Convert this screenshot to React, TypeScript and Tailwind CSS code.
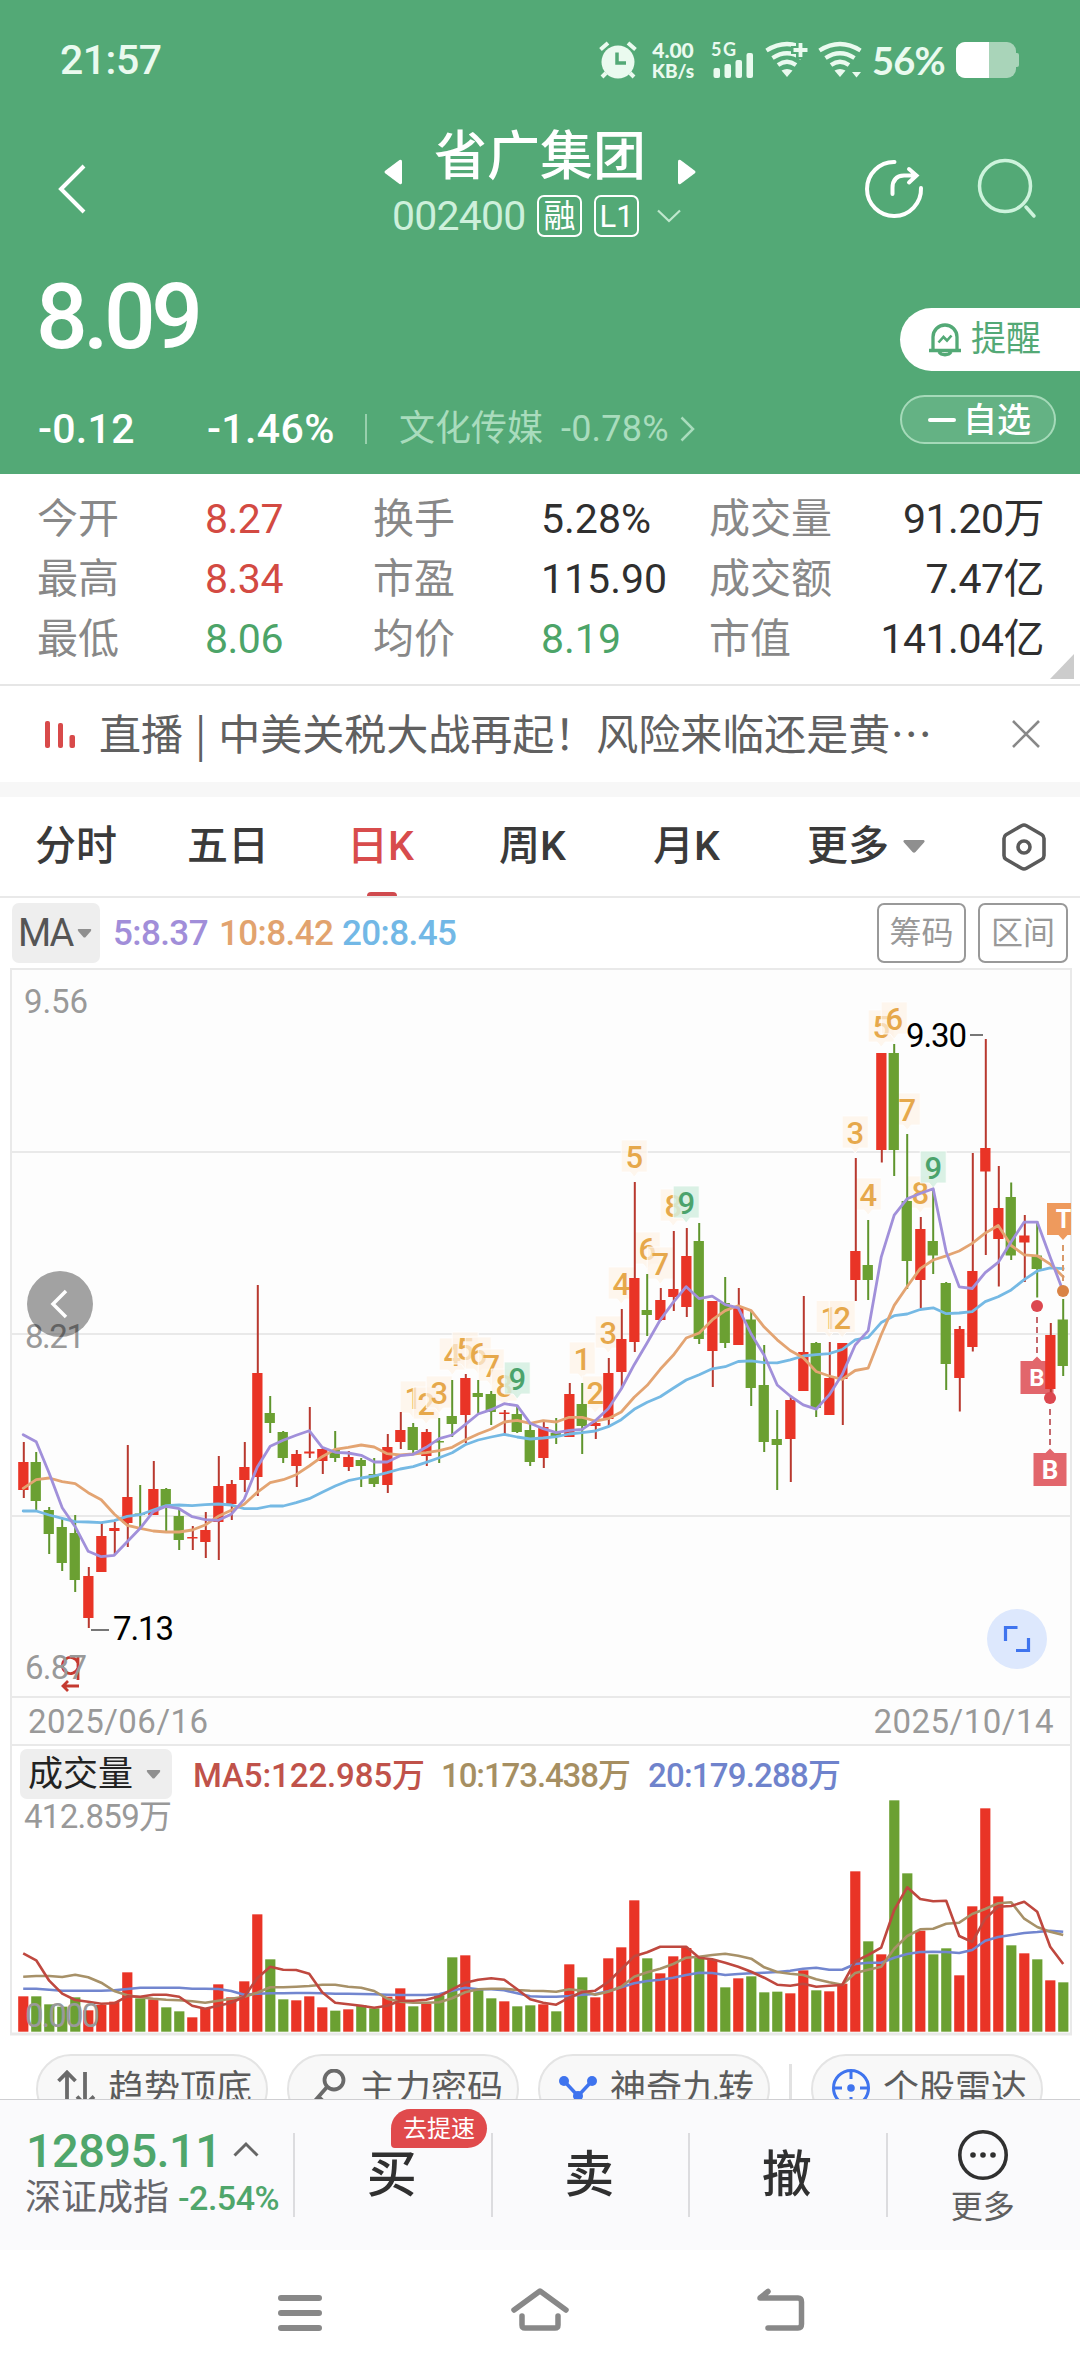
import React from "react";

const FONT = "font-[Roboto,'Noto_Sans_CJK_SC',sans-serif]";

/* ---------- chart data ---------- */

const X0 = 23.2;
const STEP = 13;
const xAt = (i: number) => X0 + STEP * i;

type Candle = ["R" | "G", number, number, number, number];

// direction, high, body top, body bottom, low (all as vertical positions)
const candles: Candle[] = [
  ["R", 1442, 1462, 1490, 1498], ["G", 1452, 1462, 1501, 1510], ["G", 1507, 1510, 1534, 1554],
  ["G", 1519, 1527, 1563, 1571], ["G", 1515, 1533, 1580, 1592], ["R", 1567, 1576, 1618, 1628],
  ["R", 1523, 1536, 1572, 1572], ["R", 1522, 1528, 1531, 1554], ["R", 1445, 1497, 1523, 1547],
  ["G", 1485, 1513.5, 1515, 1528], ["R", 1461, 1489, 1515, 1515], ["G", 1488, 1489, 1506, 1531],
  ["G", 1509, 1516, 1540, 1550], ["R", 1526, 1537, 1538.5, 1550], ["R", 1512, 1530, 1542, 1558],
  ["R", 1456, 1486, 1522, 1560], ["R", 1480, 1484, 1504, 1520], ["R", 1442, 1467, 1480, 1492],
  ["R", 1285, 1373, 1477, 1496], ["G", 1396, 1413, 1423, 1433], ["G", 1431, 1432, 1458, 1463],
  ["R", 1450, 1454, 1466, 1487], ["R", 1407, 1451.5, 1453.5, 1458], ["R", 1448, 1449, 1461, 1474],
  ["G", 1431, 1450, 1458, 1462], ["R", 1451, 1457, 1467, 1471], ["G", 1458, 1460, 1466, 1487],
  ["G", 1458, 1474, 1484, 1487], ["R", 1434, 1447, 1485, 1493], ["R", 1412, 1430, 1442, 1449],
  ["G", 1423, 1427, 1450, 1454], ["R", 1429, 1432, 1456, 1466], ["G", 1418, 1441, 1442.5, 1463],
  ["G", 1380, 1416, 1424, 1437], ["R", 1374, 1378, 1415, 1443], ["G", 1380, 1393, 1397, 1413],
  ["G", 1391, 1394, 1412, 1425], ["R", 1410, 1412.5, 1414, 1435], ["G", 1405, 1414, 1432, 1433],
  ["G", 1423, 1430, 1462, 1466], ["R", 1422, 1427, 1458, 1468], ["G", 1418, 1433, 1437, 1444],
  ["R", 1383, 1394, 1437, 1437], ["G", 1383, 1404, 1426, 1454], ["R", 1420, 1423, 1426, 1439],
  ["R", 1358, 1373, 1419, 1426], ["R", 1309, 1339, 1372, 1387], ["R", 1182, 1278, 1342, 1352],
  ["G", 1274, 1310, 1315, 1336], ["R", 1288, 1300, 1320, 1321], ["R", 1231, 1289, 1297, 1311],
  ["R", 1228, 1256, 1307, 1317], ["G", 1223, 1241, 1339, 1344], ["R", 1301, 1301, 1351, 1387],
  ["G", 1277, 1303, 1343, 1348], ["R", 1288, 1307, 1345, 1345], ["G", 1311, 1319.5, 1388, 1406],
  ["G", 1345, 1385, 1442, 1452], ["G", 1410, 1439, 1445, 1490], ["R", 1397, 1400, 1439, 1482],
  ["R", 1296, 1352, 1391, 1391], ["G", 1342, 1343, 1408, 1417], ["R", 1342, 1378, 1415, 1415],
  ["R", 1343, 1343, 1379, 1425], ["R", 1158, 1251, 1280, 1301], ["G", 1220, 1265, 1280, 1300],
  ["R", 1053, 1053, 1150, 1162.5], ["G", 1044, 1053, 1150, 1176], ["G", 1134, 1201, 1261, 1289],
  ["R", 1217, 1229, 1280, 1308], ["G", 1189, 1241, 1255.5, 1274], ["G", 1282, 1283, 1364, 1390],
  ["R", 1326, 1329, 1378, 1411.5], ["R", 1153, 1271, 1347, 1351.5], ["R", 1039, 1148, 1171.5, 1255],
  ["R", 1166, 1208, 1239, 1286.5], ["G", 1182.5, 1197, 1255.5, 1260], ["R", 1215, 1235.5, 1242.5, 1282],
  ["G", 1221, 1255.5, 1269, 1297.5], ["R", 1323, 1335, 1389, 1397], ["G", 1299, 1319.5, 1366, 1376],
];

const seg = (base: number, scale: number, v: number[]) => v.map((n) => base + n / scale);
const path = (ys: number[]) => ys.map((y, i) => `${i ? "L" : "M"}${xAt(i).toFixed(1)} ${y.toFixed(1)}`).join("");

const ma5 = [
  ...seg(1240, 3, [584, 605, 700, 803, 860, 934, 950, 946, 905, 865, 815, 799, 806, 830, 839, 841, 823, 778, 682, 619, 601, 586, 572, 622, 637]),
  ...seg(1140, 3, [939, 946, 966, 966, 947, 943, 922, 896, 885, 854, 822, 809, 791, 797, 850, 866, 878, 871, 868, 842, 806, 747, 674, 608, 540, 487, 440, 476]),
  ...seg(980, 2.904, [918, 943, 952, 1028, 1090, 1176, 1208, 1234, 1246, 1205, 1146, 1060, 1018, 805, 683, 635, 620, 606, 790, 891, 896, 850, 820, 760, 703, 703, 805, 905]),
];
const ma10 = [
  ...seg(1240, 3, [745, 719, 714, 725, 731, 758, 779, 822, 856, 865, 873, 876, 876, 870, 855, 829, 811, 793, 757, 728, 719, 704, 678, 650, 628]),
  ...seg(1140, 3, [922, 915, 921, 941, 945, 942, 938, 932, 922, 900, 882, 867, 846, 841, 850, 842, 846, 832, 832, 843, 836, 816, 772, 736, 688, 646, 594, 579]),
  ...seg(980, 2.904, [987, 960, 946, 960, 1008, 1045, 1076, 1097, 1137, 1150, 1160, 1134, 1127, 1030, 945, 890, 838, 813, 801, 787, 765, 735, 713, 771, 798, 801, 825, 862]),
];
const ma20 = [
  ...seg(1240, 3, [813, 813, 825, 835, 845, 846, 848, 842, 829, 824, 810, 797, 795, 797, 794, 792, 795, 806, 806, 798, 798, 788, 776, 757, 738]),
  ...seg(1140, 3, [1022, 1014, 1008, 998, 987, 980, 967, 953, 938, 914, 900, 891, 883, 891, 897, 894, 890, 882, 878, 873, 860, 839, 808, 787, 770, 745, 720, 704]),
  ...seg(980, 2.904, [1129, 1123, 1108, 1106, 1111, 1112, 1103, 1092, 1088, 1085, 1073, 1045, 1038, 995, 975, 970, 957, 952, 969, 967, 963, 934, 920, 900, 870, 845, 836, 838]),
];

const volumes = [
  889, 889, 913, 920, 892, 931, 915, 905, 817, 895, 898, 922, 934, 952, 925, 853, 892, 844, 643, 778, 898, 901, 889, 922, 932, 928, 916,
  925, 890, 865, 919, 911, 886, 772, 766, 870, 895, 904, 919, 916, 913, 934, 793, 832, 892, 775, 742, 601, 775, 820, 769, 744, 770, 780,
  862, 835, 829, 877, 875, 880, 811, 871, 874, 851, 514, 724, 763, 301, 520, 692, 763, 745, 826, 619, 325, 589, 736, 760, 778, 841, 847,
];
const vol5 = [
  760, 781, 842, 881, 900, 905, 911, 910, 889, 890, 884, 884, 890, 917, 926, 917, 908, 890, 835, 800, 809, 810, 821, 877, 908, 913, 917,
  923, 917, 902, 902, 899, 889, 868, 848, 839, 835, 839, 868, 898, 908, 914, 893, 876, 872, 846, 808, 769, 757, 740, 740, 740, 773, 778,
  788, 800, 815, 833, 854, 857, 851, 860, 857, 855, 784, 765, 743, 630, 562, 597, 604, 602, 708, 726, 656, 620, 618, 605, 635, 740, 792,
];
const vol10 = [
  830, 828, 828, 831, 824, 832, 848, 873, 886, 892, 896, 899, 901, 904, 908, 902, 896, 890, 878, 862, 862, 860, 858, 854, 854, 860, 863,
  873, 896, 905, 908, 908, 907, 895, 877, 868, 866, 866, 870, 872, 873, 875, 868, 872, 884, 875, 860, 830, 817, 806, 792, 773, 770, 765,
  761, 767, 776, 802, 816, 821, 825, 838, 847, 854, 819, 809, 800, 746, 708, 688, 686, 671, 668, 642, 627, 610, 607, 656, 681, 695, 705,
];
const vol20 = [
  866, 866, 869, 872, 872, 872, 872, 871, 867, 863, 863, 863, 863, 866, 866, 867, 873, 884, 881, 880, 880, 879, 879, 880, 881, 881, 882,
  883, 884, 885, 885, 885, 883, 872, 863, 868, 868, 871, 880, 889, 890, 890, 888, 884, 882, 874, 862, 850, 843, 839, 833, 825, 818, 819,
  825, 822, 820, 818, 816, 812, 806, 803, 809, 809, 792, 788, 788, 773, 762, 756, 755, 756, 759, 750, 722, 711, 705, 699, 696, 692, 695,
];

// candle index, label, vertical centre of the digit
const tags: [number, string, number][] = [
  [30, "1", 1398], [31, "2", 1404], [32, "3", 1393], [33, "4", 1355], [34, "5", 1349], [35, "6", 1354],
  [36, "7", 1366], [37, "8", 1386], [38, "9", 1379], [43, "1", 1359], [44, "2", 1393], [45, "3", 1333],
  [46, "4", 1284], [47, "5", 1157], [48, "6", 1249], [49, "7", 1264], [50, "8", 1206], [51, "9", 1203],
  [62, "1", 1317.5], [63, "2", 1317.5], [64, "3", 1133], [65, "4", 1195], [66, "5", 1027], [67, "6", 1019],
  [68, "7", 1110], [69, "8", 1193], [70, "9", 1168],
];

const RED = "#e93426";
const GREEN = "#6ba032";

function Tag({ i, label, cy }: { i: number; label: string; cy: number }) {
  const x = xAt(i);
  const nine = label === "9";
  const shape = `M${x - 13} ${cy - 17}h26v32h-9l-4 5l-4 -5h-9z`;
  return (
    <g>
      <path d={shape} fill={nine ? "#d3eee0" : "#fef2e5"} fillOpacity={nine ? 0.85 : 0.7} stroke="#fff" strokeOpacity="0.8" strokeWidth="1" />
      <text x={x} y={cy + 11} fontSize="31" fontWeight="500" textAnchor="middle" fill={nine ? "#4ba36c" : "#e6a84b"}>
        {label}
      </text>
    </g>
  );
}

function PriceChart() {
  return (
    <svg width="1080" height="730" viewBox="0 968 1080 730" className="block font-[Roboto]">
      <rect x="11" y="969" width="1060" height="728" fill="#fdfdfd" stroke="#e9e9e9" strokeWidth="2" />
      {[1152, 1334, 1516].map((y) => (
        <line key={y} x1="11" x2="1070" y1={y} y2={y} stroke="#e9e9e9" strokeWidth="2" />
      ))}
      {tags.map(([i, label, cy]) => (
        <Tag key={`${i}`} i={i} label={label} cy={cy} />
      ))}
      <path d="M1020.500 1361h12l4.500 -4.500l4.500 4.500h12v33h-33z" fill="#e2666c" />
      <text x="1037" y="1386" fontSize="24" fontWeight="700" textAnchor="middle" fill="#fff">B</text>
      {candles.map(([dir, high, top, bottom, low], i) => {
        const x = xAt(i) - (dir === "G" ? 0.6 : 0);
        return (
          <g key={i}>
            <rect x={x - 0.4} y={high} width="2" height={low - high} fill={dir === "R" ? "#b8392f" : "#5f952d"} />
            <rect x={x - 5} y={top} width="10.300" height={bottom - top} fill={dir === "R" ? RED : GREEN} />
          </g>
        );
      })}
      <g fill="none" strokeWidth="2.800" strokeLinejoin="round" strokeLinecap="round">
        <path d={path(ma20)} stroke="#75b9e4" />
        <path d={path(ma10)} stroke="#e3a472" />
        <path d={path(ma5)} stroke="#a190da" />
      </g>
      <g strokeWidth="2" strokeDasharray="6 4" fill="none">
        <path d="M1037 1317V1357" stroke="#c4686c" />
        <path d="M1050 1409V1448" stroke="#c4686c" />
        <path d="M1063 1245V1282" stroke="#d99a6a" />
      </g>
      <circle cx="1037" cy="1306" r="6" fill="#dc474f" />
      <circle cx="1050" cy="1398" r="6" fill="#dc474f" />
      <circle cx="1063" cy="1291" r="6" fill="#d98345" />
      <path d="M1033.500 1453h12l4.500 -4.500l4.500 4.500h12v33h-33z" fill="#e2666c" />
      <text x="1050" y="1479" fontSize="26" fontWeight="700" textAnchor="middle" fill="#fff">B</text>
      <svg x="1040" y="1195" width="31" height="50" viewBox="1040 1195 31 50">
        <path d="M1047 1203h33v32h-12.500l-4.500 5l-4.500 -5h-11.500z" fill="#ee9a5d" />
        <text x="1063.500" y="1228" fontSize="25" fontWeight="700" textAnchor="middle" fill="#fff">T</text>
      </svg>
      <path d="M91 1630h18M970 1035h13" stroke="#777" strokeWidth="2" />
      <g fontSize="33" fill="#000">
        <text x="113" y="1640" textLength="61">7.13</text>
        <text x="906" y="1047" textLength="61">9.30</text>
      </g>
      <path d="M78 1656v24M78 1663a8 8 0 1 0 0 5M79 1686H63m5 -5l-5 5l5 5" stroke="#c53a30" strokeWidth="2.800" fill="none" />
      <g fontSize="33" fill="#999">
        <text x="24" y="1013" textLength="64">9.56</text>
        <text x="25" y="1348" textLength="60">8.21</text>
        <text x="25" y="1679" textLength="62">6.87</text>
      </g>
      <circle cx="60" cy="1304" r="33" fill="#000" fillOpacity="0.36" />
      <path d="M66 1291L53 1304L66 1317" stroke="#fff" strokeWidth="3.500" fill="none" />
      <circle cx="1017" cy="1639" r="30" fill="#dde8fd" />
      <path d="M1017.500 1627.500H1005.500V1641M1016 1650.500H1028.500V1638" stroke="#3f74ee" strokeWidth="3.200" fill="none" />
    </svg>
  );
}

function VolumeChart() {
  const toY = (v: number) => 1700 + v / 3;
  return (
    <svg width="1080" height="236" viewBox="0 1800 1080 236" className="block overflow-visible font-[Roboto,'Noto_Sans_CJK_SC']">
      <path d="M11 1800V2034M1071 1800V2034" stroke="#e9e9e9" strokeWidth="2" />
      <path d="M10 2034H1072" stroke="#e9e9e9" strokeWidth="3" />
      <text x="24" y="1828" fontSize="33" fill="#999" textLength="148">412.859万</text>
      {volumes.map((v, i) => (
        <rect key={i} x={xAt(i) - 5} y={toY(v)} width="10.200" height={2031.7 - toY(v)} fill={candles[i][0] === "R" ? RED : GREEN} />
      ))}
      <g fill="none" strokeWidth="2.600" strokeLinejoin="round">
        <path d={path(vol20.map(toY))} stroke="#7286cf" />
        <path d={path(vol10.map(toY))} stroke="#a79168" />
        <path d={path(vol5.map(toY))} stroke="#bf483f" />
      </g>
      <text x="25" y="2027" fontSize="33" fill="#999" textLength="75">0.000</text>
    </svg>
  );
}

/* ---------- header ---------- */

function WifiArcs() {
  return (
    <g fill="none" stroke="#eafaef" strokeWidth="4.200">
      <path d="M1.500 9.500Q22 -3.500 42.500 9.500" />
      <path d="M7.500 17Q22 7.500 36.500 17" />
      <path d="M13 24Q22 17.500 31 24" />
      <path d="M16.500 29.500Q22 26.500 27.500 29.500L22 36z" fill="#eafaef" stroke="none" />
    </g>
  );
}

function StatusBar() {
  return (
    <div className="flex h-[120px] items-center pl-[60px] text-[#eafaef]">
      <span className="w-[539px] text-[41px] font-medium leading-none tracking-[-0.5px]">21:57</span>
      <svg width="38" height="38" viewBox="0 0 38 38">
        <circle cx="19" cy="21" r="16.500" fill="#eafaef" />
        <path d="M1.500 8.500L9 2M36.500 8.500L29 2M7 32l-4 4M31 32l4 4" stroke="#eafaef" strokeWidth="4" />
        <path d="M18 11.500V22h9" fill="none" stroke="#53a976" strokeWidth="3.500" />
      </svg>
      <div className="ml-3 flex w-[48px] flex-col items-center font-[Lato] text-[21px] font-black leading-[21px]">
        <span>4.00</span>
        <span className="text-[19px]">KB/s</span>
      </div>
      <svg width="46" height="38" viewBox="0 0 46 38" className="ml-[14px] overflow-visible">
        <text x="0" y="15" fontSize="18" fontWeight="700" fill="#eafaef" className="font-[Lato]" textLength="25">5G</text>
        <g fill="#eafaef">
          <rect x="2.500" y="27" width="6.500" height="10" rx="2" />
          <rect x="13.500" y="23" width="6.500" height="14" rx="2" />
          <rect x="24.500" y="19" width="6.500" height="18" rx="2" />
          <rect x="35.500" y="12" width="6.500" height="25" rx="2" />
        </g>
      </svg>
      <svg width="44" height="38" viewBox="0 0 44 38" className="ml-[8px]">
        <WifiArcs />
        <path d="M26 9h18M35 0v18" stroke="#53a976" strokeWidth="8" />
        <path d="M28.500 9h14M35.500 2v14" stroke="#eafaef" strokeWidth="3.800" />
      </svg>
      <svg width="46" height="38" viewBox="0 0 46 38" className="ml-[9px]">
        <WifiArcs />
        <path d="M34 31h9l-4.500 5.500z" fill="#eafaef" />
      </svg>
      <span className="ml-[8px] w-[84px] whitespace-nowrap font-[Lato] text-[38px] font-bold leading-none tracking-[-0.8px]">56%</span>
      <svg width="64" height="36" viewBox="0 0 64 36" className="shrink-0">
        <rect x="0" y="0" width="60" height="36" rx="9" fill="#a9d4b9" />
        <rect x="58" y="11" width="5" height="14" rx="2" fill="#a9d4b9" />
        <path d="M33 0H9a9 9 0 0 0-9 9v18a9 9 0 0 0 9 9h24z" fill="#fff" />
      </svg>
    </div>
  );
}

function TitleBar() {
  return (
    <div className="flex h-[130px] text-white">
      <svg width="30" height="50" viewBox="0 0 30 50" className="ml-[57px] mt-[44px]">
        <path d="M27 2L4 25L27 48" fill="none" stroke="#fff" strokeWidth="4" />
      </svg>
      <div className="ml-[297px] w-[312px]">
        <div className="flex h-[74px] items-center">
          <svg width="18" height="26" viewBox="0 0 18 26" className="mt-[30px]">
            <path d="M18 2.500V23.500Q18 26 15.500 25L1.500 14.500Q-0.500 13 1.500 11.500L15.500 1Q18 0 18 2.500z" fill="#fff" />
          </svg>
          <span className="w-[276px] text-center text-[53px] font-medium leading-none">省广集团</span>
          <svg width="18" height="26" viewBox="0 0 18 26" className="mt-[30px]">
            <path d="M0 2.500V23.500Q0 26 2.500 25L16.500 14.500Q18.500 13 16.500 11.500L2.500 1Q0 0 0 2.500z" fill="#fff" />
          </svg>
        </div>
        <div className="mt-[1px] flex h-[42px] items-center pl-[8px]">
          <span className="w-[145px] text-[41px] leading-none tracking-[-0.8px] text-[#cdf0db]">002400</span>
          <span className="flex h-[42px] w-[45px] items-center justify-center rounded-[7px] border-2 text-[32px] leading-none">融</span>
          <span className="ml-3 flex h-[42px] w-[45px] items-center justify-center rounded-[7px] border-2 text-[31px] leading-none">L1</span>
          <svg width="24" height="14" viewBox="0 0 24 14" className="ml-[18px]">
            <path d="M1 1.500L12 12L23 1.500" fill="none" stroke="#bfe8ce" strokeWidth="2.200" />
          </svg>
        </div>
      </div>
      <svg width="60" height="60" viewBox="0 0 60 60" className="ml-[168px] mt-[39px]" fill="none" stroke="#fff" strokeWidth="4" strokeLinecap="round">
        <path d="M30.500 3A27 27 0 1 0 57 29" />
        <path d="M28.500 35V29Q28.500 17 40 16.500H52M45 10L52.500 16.500L45 23.500" />
      </svg>
      <svg width="60" height="62" viewBox="0 0 60 62" className="ml-[53px] mt-[38px]" fill="none" stroke="#cdf3dc" strokeWidth="3.500" strokeLinecap="round">
        <circle cx="28" cy="28" r="25.500" />
        <path d="M49 49L57 58" />
      </svg>
    </div>
  );
}

function Quote() {
  return (
    <div className="flex h-[224px] justify-between text-white">
      <div className="pl-[36px] pt-[21px]">
        <div className="text-[91px] font-medium leading-[92px] tracking-[-4.5px]">8.09</div>
        <div className="mt-[46px] flex h-[40px] items-center whitespace-nowrap pl-[2px] leading-none">
          <span className="w-[169px] text-[41px] font-medium tracking-[0.3px]">-0.12</span>
          <span className="w-[158px] text-[41px] font-medium tracking-[0.4px]">-1.46%</span>
          <span className="h-[30px] w-[2px] bg-[#98d0ad]" />
          <span className="ml-[32px] w-[162px] text-[36px] text-[#a9dcbd]">文化传媒</span>
          <span className="w-[119px] text-[36px] tracking-[0.2px] text-[#a9dcbd]">-0.78%</span>
          <svg width="15" height="26" viewBox="0 0 15 26">
            <path d="M1.500 1.500L13 13L1.500 24.500" fill="none" stroke="#a9dcbd" strokeWidth="2.500" />
          </svg>
        </div>
      </div>
      <div className="w-[180px] pt-[58px]">
        <div className="flex h-[63px] items-center rounded-l-full bg-white pl-[28px] text-[#53a976]">
          <svg width="34" height="36" viewBox="0 0 34 36" fill="none" stroke="#53a976" strokeWidth="3.300">
            <path d="M5 28V15a12 12 0 0 1 24 0v13" />
            <path d="M1 28.500H33M11 30a6.500 4.500 0 0 0 12 0" />
            <path d="M10.500 20.500L15.500 15L19 18.500L23.500 13.500" strokeWidth="2.600" />
          </svg>
          <span className="ml-[9px] text-[35px] leading-none">提醒</span>
        </div>
        <div className="mt-[24px] flex h-[49px] w-[156px] items-center rounded-full border-2 border-[#a5dab9] bg-white/10 pl-[26px]">
          <span className="h-[4px] w-[28px] rounded bg-white" />
          <span className="ml-[7px] text-[34px] font-medium leading-none">自选</span>
        </div>
      </div>
    </div>
  );
}

/* ---------- stats ---------- */

const stats = [
  ["今开", "8.27", "换手", "5.28%", "成交量", "91.20万"],
  ["最高", "8.34", "市盈", "115.90", "成交额", "7.47亿"],
  ["最低", "8.06", "均价", "8.19", "市值", "141.04亿"],
];

function Stats() {
  return (
    <div className="relative h-[212px] border-b-2 border-[#e6e6e6] bg-white pt-[15px]">
      {stats.map((r, i) => (
        <div key={r[0]} className="grid h-[60px] grid-cols-[168px_168px_168px_168px_140px_1fr] items-center whitespace-nowrap pl-[37px] pr-[36px] text-[41px] leading-none text-[#2f2f2f]">
          <span className="text-[#888]">{r[0]}</span>
          <span className={i < 2 ? "tracking-[-0.5px] text-[#d34a42]" : "tracking-[-0.5px] text-[#4ca468]"}>{r[1]}</span>
          <span className="text-[#888]">{r[2]}</span>
          <span className={i === 2 ? "text-[#4ca468]" : ""}>{r[3]}</span>
          <span className="text-[#888]">{r[4]}</span>
          <span className="text-right tracking-[-0.5px]">{r[5]}</span>
        </div>
      ))}
      <svg width="24" height="25" viewBox="0 0 24 25" className="absolute bottom-[5px] right-[6px]">
        <path d="M24 0V25H0z" fill="#ccc" />
      </svg>
    </div>
  );
}

function LiveBanner() {
  return (
    <div className="flex h-[96px] items-center bg-white pl-[45px]">
      <svg width="31" height="27" viewBox="0 0 31 27">
        <g fill="#d84a4a">
          <rect x="0" y="0" width="5" height="27" rx="2" />
          <rect x="13" y="2" width="5" height="25" rx="2" />
          <rect x="24.500" y="14" width="5.500" height="13" rx="2" />
        </g>
      </svg>
      <span className="mb-[5px] ml-[23px] w-[912px] whitespace-nowrap font-['Noto_Sans_CJK_SC'] text-[42px] leading-none text-[#606060]">
        直播<span className="mx-[12px]">|</span>中美关税大战再起！风险来临还是黄…
      </span>
      <svg width="30" height="30" viewBox="0 0 30 30">
        <path d="M2 2L28 28M28 2L2 28" stroke="#888" strokeWidth="2.600" />
      </svg>
    </div>
  );
}

function Tabs() {
  const tabs: [string, string][] = [
    ["分时", "w-[152px]"],
    ["五日", "w-[160px]"],
    ["日K", "w-[152px]"],
    ["周K", "w-[154px]"],
    ["月K", "w-[154px]"],
    ["更多", "w-[96px]"],
  ];
  return (
    <div className="flex h-[101px] items-center border-b-2 border-[#e9e9e9] bg-white pl-[35px]">
      {tabs.map(([label, w]) => (
        <div key={label} className={`${w} relative flex h-full items-center text-[41px] font-medium leading-none ${label === "日K" ? "text-[#d84c4c]" : "text-[#3a3a3a]"}`}>
          {label}
          {label === "日K" && <span className="absolute bottom-0 left-[20px] h-[4px] w-[30px] rounded-t bg-[#d04a4e]" />}
        </div>
      ))}
      <svg width="22" height="13" viewBox="0 0 22 13">
        <path d="M1.500 0H20.500Q22.500 1 21 2.500L12.500 12Q11 13.500 9.500 12L1 2.500Q-0.500 1 1.500 0z" fill="#8f8f8f" />
      </svg>
      <svg width="46" height="50" viewBox="0 0 46 50" className="ml-[76px]" fill="none" stroke="#5a5a5a" strokeWidth="3.600" strokeLinejoin="round">
        <path d="M20.500 3.700Q23 2.300 25.500 3.700L41 12.700Q43 14 43 16.500V33.500Q43 36 41 37.300L25.500 46.300Q23 47.700 20.500 46.300L5 37.300Q3 36 3 33.500V16.500Q3 14 5 12.700z" />
        <circle cx="23" cy="25" r="6" />
      </svg>
    </div>
  );
}

function Caret({ w }: { w: number }) {
  return (
    <svg width={w} height="9" viewBox="0 0 14 9">
      <path d="M1 0H13Q14.500 0.500 13 2.500L8 8.200Q7 9 6 8.200L1 2.500Q-0.500 0.500 1 0z" fill="#8f8f8f" />
    </svg>
  );
}

function MaRow() {
  return (
    <div className="flex h-[70px] items-center bg-white pl-[12px] text-[35px] leading-none">
      <span className="flex h-[60px] w-[88px] items-center rounded-[7px] bg-[#eee] pl-[6px] text-[38px] tracking-[-2px] text-[#555]">
        MA
        <span className="ml-[5px]"><Caret w={15} /></span>
      </span>
      <span className="ml-[13px] w-[106px] font-medium tracking-[-0.6px] text-[#a18ed9]">5:8.37</span>
      <span className="w-[123px] font-medium tracking-[-0.6px] text-[#e2a36e]">10:8.42</span>
      <span className="w-[535px] font-medium tracking-[-0.6px] text-[#72b8e6]">20:8.45</span>
      <span className="flex h-[60px] w-[89px] items-center justify-center rounded-[7px] border-2 border-[#999] text-[32px] text-[#999]">筹码</span>
      <span className="ml-[12px] flex h-[60px] w-[90px] items-center justify-center rounded-[7px] border-2 border-[#999] text-[32px] text-[#999]">区间</span>
    </div>
  );
}

/* ---------- bottom ---------- */

function Pill({ icon, label, className }: { icon: React.ReactNode; label: string; className: string }) {
  return (
    <div className={`flex h-[70px] w-[232px] shrink-0 items-center rounded-[36px] border-2 border-[#e4e4e4] bg-[#f8f8f8] pl-[19px] ${className}`}>
      <svg width="40" height="40" viewBox="0 0 40 40" fill="none" className="shrink-0">{icon}</svg>
      <span className="ml-[11px] whitespace-nowrap text-[36px] leading-none text-[#5c5c5c]">{label}</span>
    </div>
  );
}

function Tools() {
  return (
    <div className="flex h-[63px] items-start overflow-hidden bg-white pt-[18px]">
      <Pill
        className="ml-[36px]"
        label="趋势顶底"
        icon={<path d="M10 37V4M1.500 12L10 3.500L18.500 12M28 3V36M20 27.500L28 36L37 27.500" stroke="#6a6a6a" strokeWidth="3.800" />}
      />
      <Pill
        className="ml-[19px]"
        label="主力密码"
        icon={
          <g stroke="#6a6a6a" strokeWidth="3.800">
            <circle cx="26" cy="11" r="9.500" />
            <path d="M19 18L5 34M10 27l6 6" />
          </g>
        }
      />
      <Pill
        className="ml-[19px]"
        label="神奇九转"
        icon={
          <g stroke="#3f74ee" strokeWidth="3.500">
            <path d="M5 12L19 27L33 12M19 28V38" />
            <g fill="#3f74ee" stroke="none">
              <circle cx="5" cy="12" r="5" />
              <circle cx="33" cy="12" r="5" />
              <circle cx="19" cy="27" r="5" />
            </g>
          </g>
        }
      />
      <span className="mx-[19px] mt-[10px] h-[50px] w-[3px] bg-[#e2e2e2]" />
      <Pill
        className=""
        label="个股雷达"
        icon={
          <g stroke="#3f74ee" strokeWidth="3">
            <circle cx="19" cy="19" r="17.500" />
            <path d="M19 2V10M2 19H10M28 19H36M19 28V36" />
            <circle cx="19" cy="19" r="3.800" fill="#3f74ee" stroke="none" />
          </g>
        }
      />
    </div>
  );
}

function TradeBar() {
  return (
    <div className="flex h-[151px] border-t border-[#cfcfd2] bg-[#fafafc]">
      <div className="w-[293px] whitespace-nowrap pt-[26px]">
        <div className="flex h-[48px] items-center pl-[26px] leading-none">
          <span className="w-[207px] text-[47px] font-medium tracking-[-0.6px] text-[#4fa66b]">12895.11</span>
          <svg width="26" height="16" viewBox="0 0 26 16" className="mb-[2px]">
            <path d="M1.500 14.500L13 3L24.500 14.500" fill="none" stroke="#666" strokeWidth="3" />
          </svg>
        </div>
        <div className="mt-[4px] flex h-[40px] items-center pl-[25px] leading-none">
          <span className="w-[153px] text-[36px] text-[#66666b]">深证成指</span>
          <span className="text-[34px] font-medium tracking-[-0.5px] text-[#4fa66b]">-2.54%</span>
        </div>
      </div>
      {["买", "卖", "撤"].map((t) => (
        <div key={t} className="relative flex w-[197.500px] items-center justify-center text-[50px] font-medium leading-none text-[#303030]">
          <span className="absolute left-0 top-[33px] h-[84px] w-[2px] bg-[#dcdcdf]" />
          {t}
          {t === "买" && (
            <span className="absolute left-[98px] top-[9px] flex h-[39px] w-[96px] items-center justify-center rounded-[20px] rounded-bl-[4px] bg-[#e04a4c] text-[24px] font-normal text-white">
              去提速
            </span>
          )}
        </div>
      ))}
      <div className="relative flex flex-1 flex-col items-center pt-[30px]">
        <span className="absolute left-0 top-[33px] h-[84px] w-[2px] bg-[#dcdcdf]" />
        <svg width="50" height="50" viewBox="0 0 50 50">
          <circle cx="25" cy="25" r="23.200" fill="none" stroke="#303030" strokeWidth="3.600" />
          <circle cx="15" cy="25" r="2.800" fill="#303030" />
          <circle cx="25" cy="25" r="2.800" fill="#303030" />
          <circle cx="35" cy="25" r="2.800" fill="#303030" />
        </svg>
        <span className="mt-[11px] text-[32px] leading-none text-[#606060]">更多</span>
      </div>
    </div>
  );
}

function SystemNav() {
  return (
    <div className="flex h-[126px] bg-white pt-[36px]">
      <svg width="44" height="46" viewBox="0 0 44 46" className="ml-[278px]" fill="none" stroke="#888" strokeWidth="6" strokeLinecap="round">
        <path d="M3 12H41M3 27H41M3 42H41" />
      </svg>
      <svg width="60" height="46" viewBox="0 0 60 46" className="ml-[188px]" fill="none" stroke="#888" strokeWidth="5.500" strokeLinecap="round" strokeLinejoin="round">
        <path d="M4 24L30 5L56 24M12 30V39Q12 42 15 42H45Q48 42 48 39V30" />
      </svg>
      <svg width="50" height="46" viewBox="0 0 50 46" className="ml-[185px]" fill="none" stroke="#888" strokeWidth="5.500" strokeLinecap="round" strokeLinejoin="round">
        <path d="M13 42H43Q46.500 42 46.500 38V16Q46.500 12 43 12H5L13 5.500" />
      </svg>
    </div>
  );
}

export default function App() {
  return (
    <div className={`h-[2376px] w-[1080px] overflow-hidden bg-white ${FONT}`}>
      <div className="h-[474px] bg-[#53a976]">
        <StatusBar />
        <TitleBar />
        <Quote />
      </div>
      <Stats />
      <LiveBanner />
      <div className="h-[15px] bg-[#f7f7f7]" />
      <Tabs />
      <MaRow />
      <PriceChart />
      <div className="ml-[10px] mr-[8px] flex h-[48px] items-center justify-between border-x-2 border-b-2 border-[#e9e9e9] bg-[#fdfdfd] pl-[16px] pr-[16px] text-[33px] leading-none tracking-[0.5px] text-[#999]">
        <span>2025/06/16</span>
        <span>2025/10/14</span>
      </div>
      <div className="ml-[10px] mr-[8px] flex h-[54px] items-center whitespace-nowrap border-x-2 border-[#e9e9e9] bg-white pl-[8px] text-[33px] leading-none">
        <span className="mt-[2px] flex h-[50px] w-[152px] items-center rounded-[7px] bg-[#eee] pl-[8px] text-[35px] text-[#222]">
          成交量<span className="ml-[13px]"><Caret w={15} /></span>
        </span>
        <span className="ml-[21px] mt-[5px] w-[248px] font-medium tracking-[-0.1px] text-[#c0524a]">MA5:122.985万</span>
        <span className="mt-[5px] w-[207px] font-medium tracking-[-1.1px] text-[#a68f62]">10:173.438万</span>
        <span className="mt-[5px] font-medium tracking-[-0.8px] text-[#6f83cc]">20:179.288万</span>
      </div>
      <VolumeChart />
      <Tools />
      <TradeBar />
      <SystemNav />
    </div>
  );
}
